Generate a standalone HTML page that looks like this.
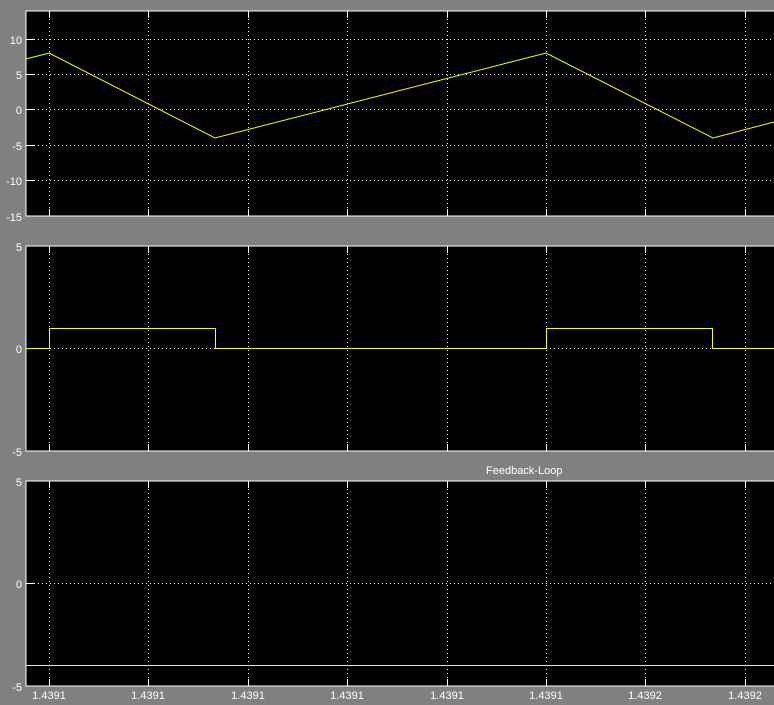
<!DOCTYPE html>
<html><head><meta charset="utf-8"><style>
html,body{margin:0;padding:0;background:#808080;overflow:hidden}
svg{display:block}
text{font-family:"Liberation Sans",sans-serif;font-size:11px;fill:#fff}
</style></head><body>
<svg width="774" height="705" xmlns="http://www.w3.org/2000/svg">
<rect width="774" height="705" fill="#808080"/>
<!-- panels -->
<g>
<rect x="26" y="11" width="760" height="205" fill="#000" stroke="#fff" stroke-width="1"/>
<rect x="26" y="246" width="760" height="205" fill="#000" stroke="#fff" stroke-width="1"/>
<rect x="26" y="481" width="760" height="205" fill="#000" stroke="#fff" stroke-width="1"/>
</g>
<!-- vertical grid -->
<g stroke="#fff" stroke-width="1" stroke-dasharray="1 3">
<path d="M49.5 11V216M148.5 11V216M248.5 11V216M347.5 11V216M447.5 11V216M546.5 11V216M645.5 11V216M745.5 11V216"/>
<path d="M49.5 246V451M148.5 246V451M248.5 246V451M347.5 246V451M447.5 246V451M546.5 246V451M645.5 246V451M745.5 246V451"/>
<path d="M49.5 481V686M148.5 481V686M248.5 481V686M347.5 481V686M447.5 481V686M546.5 481V686M645.5 481V686M745.5 481V686"/>
<path d="M26 39.5H774M26 74.5H774M26 109.5H774M26 145.5H774M26 180.5H774"/>
<path d="M26 348.5H774M26 583.5H774"/>
</g>
<!-- ticks -->
<g stroke="#fff" stroke-width="1">
<path d="M49.5 11v7M148.5 11v7M248.5 11v7M347.5 11v7M447.5 11v7M546.5 11v7M645.5 11v7M745.5 11v7"/>
<path d="M49.5 216v-7M148.5 216v-7M248.5 216v-7M347.5 216v-7M447.5 216v-7M546.5 216v-7M645.5 216v-7M745.5 216v-7"/>
<path d="M49.5 246v7M148.5 246v7M248.5 246v7M347.5 246v7M447.5 246v7M546.5 246v7M645.5 246v7M745.5 246v7"/>
<path d="M49.5 451v-7M148.5 451v-7M248.5 451v-7M347.5 451v-7M447.5 451v-7M546.5 451v-7M645.5 451v-7M745.5 451v-7"/>
<path d="M49.5 481v7M148.5 481v7M248.5 481v7M347.5 481v7M447.5 481v7M546.5 481v7M645.5 481v7M745.5 481v7"/>
<path d="M49.5 686v-7M148.5 686v-7M248.5 686v-7M347.5 686v-7M447.5 686v-7M546.5 686v-7M645.5 686v-7M745.5 686v-7"/>
<path d="M26 39.5h9M26 74.5h9M26 109.5h9M26 145.5h9M26 180.5h9M26 348.5h9M26 583.5h9"/>
</g>
<!-- signals -->
<g fill="none" stroke="#ffff00" stroke-width="1">
<polyline points="26,59 49,53 215,138 546,53 713,138 774,122"/>
<polyline points="26,348.5 49.5,348.5 49.5,328.5 215.5,328.5 215.5,348.5 546.5,348.5 546.5,328.5 712.5,328.5 712.5,348.5 774,348.5"/>
<line x1="26" y1="665.5" x2="774" y2="665.5"/>
</g>
<!-- y labels -->
<g text-anchor="end">
<text x="22" y="44">10</text><text x="22" y="79">5</text><text x="22" y="114">0</text>
<text x="22" y="150">-5</text><text x="22" y="185">-10</text><text x="22" y="221">-15</text>
<text x="22" y="251">5</text><text x="22" y="353">0</text><text x="22" y="456">-5</text>
<text x="22" y="486">5</text><text x="22" y="588">0</text><text x="22" y="691">-5</text>
</g>
<text x="486" y="474">Feedback-Loop</text>
<g text-anchor="middle">
<text x="49" y="699">1.4391</text><text x="148" y="699">1.4391</text><text x="248" y="699">1.4391</text>
<text x="347" y="699">1.4391</text><text x="447" y="699">1.4391</text><text x="546" y="699">1.4391</text>
<text x="645" y="699">1.4392</text><text x="745" y="699">1.4392</text>
</g>
</svg>
</body></html>
